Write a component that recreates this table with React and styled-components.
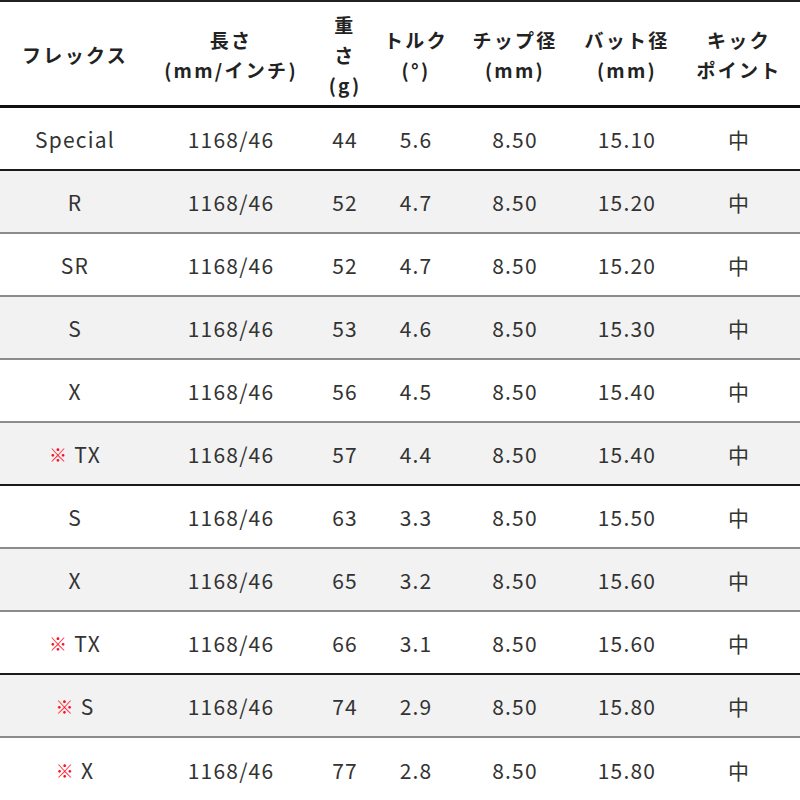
import styled, { createGlobalStyle } from "styled-components";

const GlobalStyle = createGlobalStyle`
  html, body {
    margin: 0;
    padding: 0;
    background: #ffffff;
  }
  body {
    font-family: "Noto Sans CJK JP", "Noto Sans", sans-serif;
  }
`;

const COLUMNS = "150px 162px 66px 76px 122px 102px 122px";

const Table = styled.div`
  width: 800px;
  border-top: 2px solid #222;
`;

const HeaderRow = styled.div`
  display: grid;
  grid-template-columns: ${COLUMNS};
  height: 106px;
  padding-top: 2px;
  box-sizing: border-box;
  border-bottom: 3px solid #111;
`;

const HeaderCell = styled.div`
  display: flex;
  flex-direction: column;
  align-items: center;
  justify-content: center;
  font-size: 19px;
  font-weight: 700;
  line-height: 30px;
  letter-spacing: 2.3px;
  color: #222;
  text-align: center;
  white-space: nowrap;
`;

const Row = styled.div`
  display: grid;
  grid-template-columns: ${COLUMNS};
  height: 63px;
  box-sizing: border-box;
  background: ${(p) => (p.$shaded ? "#f2f2f2" : "#ffffff")};
  border-bottom: ${(p) => (p.$strong ? "2px solid #1a1a1a" : "2px solid #8c8c8c")};

  &:last-child {
    border-bottom: none;
  }
`;

const Cell = styled.div`
  display: flex;
  align-items: center;
  justify-content: center;
  font-size: 21px;
  letter-spacing: 1.2px;
  color: #333;
  white-space: nowrap;
`;

const Mark = styled.span`
  color: #ff0a1e;
  font-size: 18px;
  font-weight: 700;
  margin-right: 6px;
`;

const headers = [
  ["フレックス"],
  ["長さ", "(mm/インチ)"],
  ["重", "さ", "(g)"],
  ["トルク", "(°)"],
  ["チップ径", "(mm)"],
  ["バット径", "(mm)"],
  ["キック", "ポイント"],
];

const rows = [
  { flex: "Special", weight: 44, torque: "5.6", butt: "15.10", strong: true },
  { flex: "R", weight: 52, torque: "4.7", butt: "15.20" },
  { flex: "SR", weight: 52, torque: "4.7", butt: "15.20" },
  { flex: "S", weight: 53, torque: "4.6", butt: "15.30" },
  { flex: "X", weight: 56, torque: "4.5", butt: "15.40" },
  { flex: "TX", mark: true, weight: 57, torque: "4.4", butt: "15.40", strong: true },
  { flex: "S", weight: 63, torque: "3.3", butt: "15.50" },
  { flex: "X", weight: 65, torque: "3.2", butt: "15.60" },
  { flex: "TX", mark: true, weight: 66, torque: "3.1", butt: "15.60", strong: true },
  { flex: "S", mark: true, weight: 74, torque: "2.9", butt: "15.80" },
  { flex: "X", mark: true, weight: 77, torque: "2.8", butt: "15.80" },
];

export default function App() {
  return (
    <>
      <GlobalStyle />
      <Table>
        <HeaderRow>
          {headers.map((lines, i) => (
            <HeaderCell key={i}>
              {lines.map((line) => (
                <span key={line}>{line}</span>
              ))}
            </HeaderCell>
          ))}
        </HeaderRow>
        {rows.map((r, i) => (
          <Row key={i} $shaded={i % 2 === 1} $strong={r.strong}>
            <Cell>
              {r.mark && <Mark>※</Mark>}
              {r.flex}
            </Cell>
            <Cell>1168/46</Cell>
            <Cell>{r.weight}</Cell>
            <Cell>{r.torque}</Cell>
            <Cell>8.50</Cell>
            <Cell>{r.butt}</Cell>
            <Cell>中</Cell>
          </Row>
        ))}
      </Table>
    </>
  );
}
